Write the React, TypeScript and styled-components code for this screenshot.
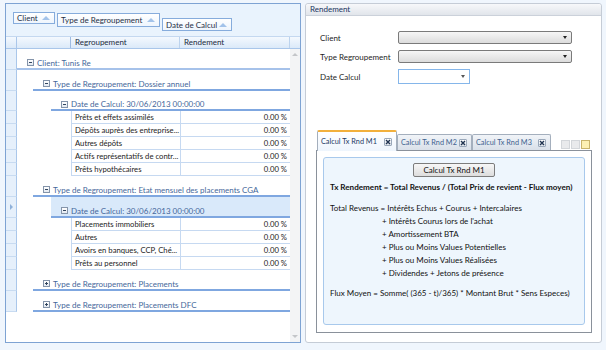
import styled, { createGlobalStyle } from "styled-components";

const GlobalStyle = createGlobalStyle`
    html, body {
        margin: 0;
        padding: 0;
    }
    body {
        width: 606px;
        height: 350px;
        overflow: hidden;
        background: #f0f6fd;
        font-family: Lato, "Open Sans", sans-serif;
        font-size: 8px;
        color: #1d1d1d;
    }
`

const Page = styled.div`
    display: flex;
    gap: 4px;
    padding: 3px 4px 0 5px;
    height: 340px;
`

/* ---------- left : grid ---------- */

const Grid = styled.div`
    width: 296px;
    box-sizing: border-box;
    border: 1px solid #7ea3d3;
    background: #fff;
    display: flex;
    flex-direction: column;
`

const GroupPanel = styled.div`
    height: 32px;
    flex-shrink: 0;
    background: #e9f3fd;
    display: flex;
    align-items: flex-start;
    gap: 2px;
    padding-left: 7px;
`

const Chip = styled.div<{ $top: number; $h: number; $w: number }>`
    margin-top: ${p => p.$top}px;
    width: ${p => p.$w}px;
    height: ${p => p.$h}px;
    box-sizing: border-box;
    border: 1px solid #86acdc;
    background: linear-gradient(#ffffff, #eef5fd);
    display: flex;
    align-items: center;
    justify-content: space-between;
    padding: 0 4px 0 3px;
    color: #1f2f44;
    white-space: nowrap;
`

const UpArrow = styled.span`
    width: 0;
    height: 0;
    border-left: 4px solid transparent;
    border-right: 4px solid transparent;
    border-bottom: 4px solid #a3c3ea;
`

const HeaderRow = styled.div`
    height: 13px;
    flex-shrink: 0;
    display: flex;
    background: linear-gradient(#f4f9fe, #dbe9f9);
    border-top: 1px solid #c4d8f0;
    border-bottom: 1px solid #a9c6ea;
    box-sizing: border-box;
`

const HeadCell = styled.div<{ $w: number; $line?: string }>`
    width: ${p => p.$w}px;
    flex-shrink: 0;
    box-sizing: border-box;
    border-right: 1px solid ${p => p.$line || "#bcd3ee"};
    padding-left: 4px;
    line-height: 11px;
    color: #1c2b40;
    &:last-child {
        border-right: none;
    }
`

const Body = styled.div`
    flex: 1;
    display: flex;
    min-height: 0;
`

const Rows = styled.div`
    flex: 1;
    display: flex;
    flex-direction: column;
`

const Row = styled.div<{ $h: number }>`
    display: flex;
    height: ${p => p.$h}px;
    flex-shrink: 0;
`

const Indicator = styled.div`
    width: 11px;
    flex-shrink: 0;
    box-sizing: border-box;
    background: #e6f0fb;
    border-right: 1px solid #aac7ea;
    border-bottom: 1px solid #c8dbf1;
    display: flex;
    align-items: center;
    justify-content: center;
`

const RightArrow = styled.span`
    width: 0;
    height: 0;
    border-top: 3px solid transparent;
    border-bottom: 3px solid transparent;
    border-left: 3px solid #8fb1da;
`

const GroupCell = styled.div<{ $indent: number; $active?: boolean; $line: string }>`
    flex: 1;
    margin-left: ${p => p.$indent}px;
    border-bottom: 2px solid ${p => p.$line};
    background: ${p => (p.$active ? "#d9e9fa" : "transparent")};
    display: flex;
    align-items: center;
    gap: 3px;
    padding: 8px 0 0 10px;
    color: #45679a;
    white-space: nowrap;
`

const Expander = styled.span<{ $collapsed?: boolean }>`
    position: relative;
    width: 7px;
    height: 7px;
    box-sizing: border-box;
    border: 1px solid #8494aa;
    background: linear-gradient(#ffffff, #e3e9f1);
    &::before {
        content: "";
        position: absolute;
        left: 1px;
        top: 2px;
        width: 3px;
        height: 1px;
        background: #33465f;
    }
    &::after {
        content: "";
        display: ${p => (p.$collapsed ? "block" : "none")};
        position: absolute;
        left: 2px;
        top: 1px;
        width: 1px;
        height: 3px;
        background: #33465f;
    }
`

const DataCells = styled.div`
    flex: 1;
    margin-left: 54px;
    display: flex;
`

const Cell = styled.div<{ $w: number; $right?: boolean }>`
    width: ${p => p.$w}px;
    box-sizing: border-box;
    border-left: 1px solid #c6d9f1;
    border-bottom: 1px solid #c6d9f1;
    padding: ${p => (p.$right ? "0 3px 0 3px" : "0 0 0 3px")};
    font-size: 7.7px;
    line-height: 12px;
    text-align: ${p => (p.$right ? "right" : "left")};
    white-space: nowrap;
    overflow: hidden;
    color: #1d1d1d;
`

const Scrollbar = styled.div`
    width: 10px;
    flex-shrink: 0;
    background: #f3f4f5;
    display: flex;
    flex-direction: column;
    justify-content: space-between;
    align-items: center;
    padding: 4px 0;
`

const ScrollUp = styled.span`
    width: 0;
    height: 0;
    border-left: 3px solid transparent;
    border-right: 3px solid transparent;
    border-bottom: 3px solid #c4c6c9;
`

const ScrollDown = styled.span`
    width: 0;
    height: 0;
    border-left: 3px solid transparent;
    border-right: 3px solid transparent;
    border-top: 3px solid #c4c6c9;
`

/* ---------- right : rendement panel ---------- */

const Panel = styled.div`
    width: 297px;
    box-sizing: border-box;
    border: 1px solid #c5ccd6;
    border-radius: 3px;
    background: #fff;
    display: flex;
    flex-direction: column;
`

const PanelHeader = styled.div`
    height: 12px;
    box-sizing: border-box;
    background: linear-gradient(#f7f8fa, #e1e5eb);
    border-bottom: 1px solid #cbd1da;
    border-radius: 3px 3px 0 0;
    color: #1a3560;
    padding-left: 4px;
    line-height: 11px;
`

const Form = styled.div`
    display: grid;
    grid-template-columns: 78px 174px;
    row-gap: 6px;
    padding: 15px 0 0 14px;
    align-items: center;
`

const Label = styled.div`
    color: #1d1d1d;
`

const Combo = styled.div`
    height: 13px;
    box-sizing: border-box;
    border: 1px solid #7a7a7a;
    border-radius: 2px;
    background: linear-gradient(#f6f6f6, #dcdcdc);
    display: flex;
    align-items: center;
    justify-content: flex-end;
    padding-right: 4px;
`

const DateBox = styled.div`
    width: 72px;
    height: 15px;
    box-sizing: border-box;
    border: 1px solid #85b6ea;
    background: #fff;
    display: flex;
    align-items: center;
    justify-content: flex-end;
    padding-right: 4px;
`

const DownArrow = styled.span<{ $color?: string }>`
    width: 0;
    height: 0;
    border-left: 2px solid transparent;
    border-right: 2px solid transparent;
    border-top: 3px solid ${p => p.$color || "#222"};
`

const Tabs = styled.div`
    margin: 45px 9px 9px 10px;
    flex: 1;
    display: flex;
    flex-direction: column;
`

const TabStrip = styled.div`
    height: 21px;
    display: flex;
    align-items: flex-end;
    padding-left: 1px;
`

const Tab = styled.div<{ $active?: boolean; $w: number }>`
    width: ${p => p.$w}px;
    height: ${p => (p.$active ? 21 : 16)}px;
    box-sizing: border-box;
    border: 1px solid #a4afbd;
    border-bottom: none;
    border-top: ${p => (p.$active ? "2px solid #f2b03c" : "1px solid #a4afbd")};
    border-radius: 2px 2px 0 0;
    background: ${p => (p.$active ? "linear-gradient(#ffffff, #eef5fd)" : "linear-gradient(#f1f4f8, #d9e0e9)")};
    color: ${p => (p.$active ? "#1d3b66" : "#40628f")};
    font-size: 7.3px;
    display: flex;
    align-items: center;
    justify-content: space-between;
    padding: 0 4px 0 3px;
    white-space: nowrap;
    margin-bottom: ${p => (p.$active ? -1 : 0)}px;
    position: relative;
    z-index: ${p => (p.$active ? 1 : 0)};
`

const CloseBox = styled.span`
    width: 8px;
    height: 8px;
    flex-shrink: 0;
    box-sizing: border-box;
    border: 1px solid #9aa8ba;
    border-radius: 1px;
    background: linear-gradient(#ffffff, #dfe5ec);
    display: flex;
    align-items: center;
    justify-content: center;
`

const StripTools = styled.div`
    margin-left: auto;
    display: flex;
    gap: 1px;
    margin-bottom: 1px;
    margin-right: 2px;
`

const ToolSquare = styled.span<{ $on?: boolean }>`
    width: 9px;
    height: 9px;
    box-sizing: border-box;
    border: 1px solid ${p => (p.$on ? "#c9b56c" : "#d3d6da")};
    background: ${p => (p.$on ? "#fdf1b3" : "#e9eaec")};
`

const TabContent = styled.div`
    flex: 1;
    border: 1px solid #8a919b;
    background: #fff;
    padding: 6px 6px 7px 6px;
    display: flex;
`

const Inner = styled.div`
    flex: 1;
    border: 1px solid #a8c9ec;
    border-radius: 3px;
    background: #eef6fd;
    padding: 5px 6px 0 6px;
    display: flex;
    flex-direction: column;
`

const CalcButton = styled.div`
    align-self: center;
    width: 82px;
    height: 14px;
    box-sizing: border-box;
    border: 1px solid #7c7c7c;
    border-radius: 2px;
    background: linear-gradient(#f7f7f7, #dddddd);
    display: flex;
    align-items: center;
    justify-content: center;
    color: #111;
`

const Formula = styled.div<{ $bold?: boolean; $pad?: number; $gap?: number }>`
    line-height: 13px;
    font-weight: ${p => (p.$bold ? 700 : 400)};
    font-size: ${p => (p.$bold ? 8.1 : 8)}px;
    padding-left: ${p => p.$pad || 0}px;
    margin-top: ${p => p.$gap || 0}px;
    white-space: nowrap;
    color: #111;
`

type GridRow =
    | { kind: "group"; text: string; level: number; h: number; collapsed?: boolean; active?: boolean }
    | { kind: "data"; label: string; value: string };

const levelIndent = [0, 16, 34];
const levelLine = ["#a6c2ea", "#7fa7e0", "#7fa7e0"];

const rows: GridRow[] = [
    { kind: "group", text: "Client: Tunis Re", level: 0, h: 21 },
    { kind: "group", text: "Type de Regroupement: Dossier annuel", level: 1, h: 21 },
    { kind: "group", text: "Date de Calcul: 30/06/2013 00:00:00", level: 2, h: 20 },
    { kind: "data", label: "Prêts et effets assimilés", value: "0.00 %" },
    { kind: "data", label: "Dépôts auprès des entreprise...", value: "0.00 %" },
    { kind: "data", label: "Autres dépôts", value: "0.00 %" },
    { kind: "data", label: "Actifs représentatifs de contr...", value: "0.00 %" },
    { kind: "data", label: "Prêts hypothécaires", value: "0.00 %" },
    { kind: "group", text: "Type de Regroupement: Etat mensuel des placements CGA", level: 1, h: 21 },
    { kind: "group", text: "Date de Calcul: 30/06/2013 00:00:00", level: 2, h: 21, active: true },
    { kind: "data", label: "Placements immobiliers", value: "0.00 %" },
    { kind: "data", label: "Autres", value: "0.00 %" },
    { kind: "data", label: "Avoirs en banques, CCP, Ché...", value: "0.00 %" },
    { kind: "data", label: "Prêts au personnel", value: "0.00 %" },
    { kind: "group", text: "Type de Regroupement: Placements", level: 1, h: 21, collapsed: true },
    { kind: "group", text: "Type de Regroupement: Placements DFC", level: 1, h: 21, collapsed: true },
];

const revenus = [
    "+ Intérêts Courus lors de l'achat",
    "+ Amortissement BTA",
    "+ Plus ou Moins Values Potentielles",
    "+ Plus ou Moins Values Réalisées",
    "+ Dividendes + Jetons de présence",
];

function Close() {
    return (
        <CloseBox>
            <svg width="6" height="6" viewBox="0 0 6 6">
                <path d="M1 1 L5 5 M5 1 L1 5" stroke="#1f3350" strokeWidth="1.4" />
            </svg>
        </CloseBox>
    );
}

export default function App() {
    return (
        <>
            <GlobalStyle />
            <Page>
                <Grid>
                    <GroupPanel>
                        <Chip $top={8} $h={12} $w={42}>Client<UpArrow /></Chip>
                        <Chip $top={9} $h={14} $w={103}>Type de Regroupement<UpArrow /></Chip>
                        <Chip $top={14} $h={13} $w={70}>Date de Calcul<UpArrow /></Chip>
                    </GroupPanel>
                    <HeaderRow>
                        <HeadCell $w={11} $line="#aac7ea" />
                        <HeadCell $w={54} $line="#9dbbe2" />
                        <HeadCell $w={109}>Regroupement</HeadCell>
                        <HeadCell $w={110}>Rendement</HeadCell>
                        <HeadCell $w={10} />
                    </HeaderRow>
                    <Body>
                        <Rows>
                            {rows.map((r, i) =>
                                r.kind === "group" ? (
                                    <Row key={i} $h={r.h}>
                                        <Indicator>{r.active ? <RightArrow /> : null}</Indicator>
                                        <GroupCell $indent={levelIndent[r.level]} $active={r.active} $line={levelLine[r.level]}>
                                            <Expander $collapsed={r.collapsed} />
                                            {r.text}
                                        </GroupCell>
                                    </Row>
                                ) : (
                                    <Row key={i} $h={13}>
                                        <Indicator />
                                        <DataCells>
                                            <Cell $w={109}>{r.label}</Cell>
                                            <Cell $w={110} $right>{r.value}</Cell>
                                        </DataCells>
                                    </Row>
                                )
                            )}
                        </Rows>
                        <Scrollbar>
                            <ScrollUp />
                            <ScrollDown />
                        </Scrollbar>
                    </Body>
                </Grid>

                <Panel>
                    <PanelHeader>Rendement</PanelHeader>
                    <Form>
                        <Label>Client</Label>
                        <Combo><DownArrow /></Combo>
                        <Label>Type Regroupement</Label>
                        <Combo><DownArrow /></Combo>
                        <Label>Date Calcul</Label>
                        <DateBox><DownArrow $color="#555" /></DateBox>
                    </Form>
                    <Tabs>
                        <TabStrip>
                            <Tab $active $w={80}>Calcul Tx Rnd M1<Close /></Tab>
                            <Tab $w={75}>Calcul Tx Rnd M2<Close /></Tab>
                            <Tab $w={79}>Calcul Tx Rnd M3<Close /></Tab>
                            <StripTools>
                                <ToolSquare />
                                <ToolSquare />
                                <ToolSquare $on />
                            </StripTools>
                        </TabStrip>
                        <TabContent>
                            <Inner>
                                <CalcButton>Calcul Tx Rnd M1</CalcButton>
                                <Formula $bold $gap={4}>Tx Rendement = Total Revenus / (Total Prix de revient - Flux moyen)</Formula>
                                <Formula $gap={8}>Total Revenus = Intérêts Echus + Courus + Intercalaires</Formula>
                                {revenus.map(t => (
                                    <Formula key={t} $pad={52}>{t}</Formula>
                                ))}
                                <Formula $gap={7}>Flux Moyen = Somme( (365 - t)/365) * Montant Brut * Sens Especes)</Formula>
                            </Inner>
                        </TabContent>
                    </Tabs>
                </Panel>
            </Page>
        </>
    );
}
